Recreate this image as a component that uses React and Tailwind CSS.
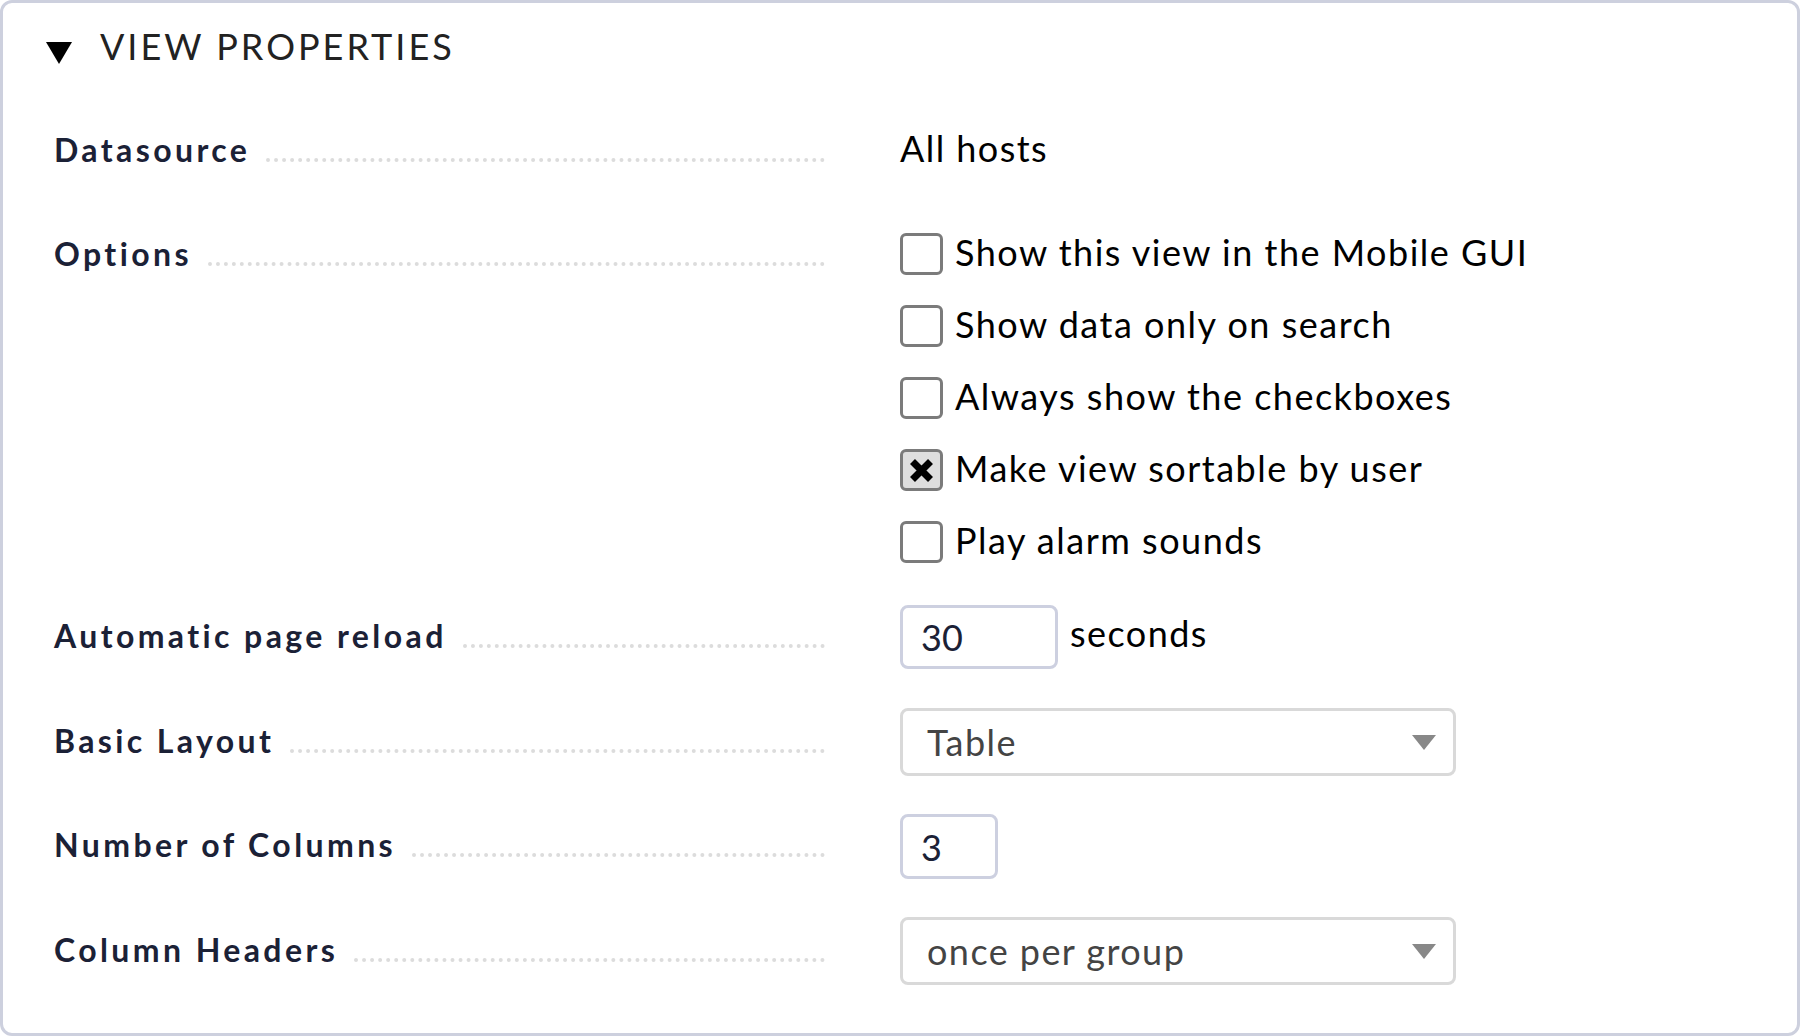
import React from 'react';

function Label({ children, className = '' }) {
  return (
    <div className={`flex items-baseline w-[897px] shrink-0 pl-[51px] pr-[75px] ${className}`}>
      <span className="text-[32px] leading-none font-bold tracking-[3.4px] text-[#1b2136] whitespace-nowrap">
        {children}
      </span>
      <span className="flex-1 ml-[16px] border-b-[4px] border-dotted border-[#dcdcdc]" />
    </div>
  );
}

function Check({ checked, label }) {
  return (
    <div className="flex items-baseline text-[36px] leading-[72px] tracking-[1.5px] text-black">
      <span
        className={
          checked
            ? 'self-center mt-[4px] w-[43px] h-[42px] shrink-0 rounded-[6px] border-[3px] border-[#7b7b7b] bg-[#dedede] flex items-center justify-center'
            : 'self-center mt-[4px] w-[43px] h-[42px] shrink-0 rounded-[6px] border-[3px] border-[#7b7b7b] bg-white'
        }
      >
        {checked && (
          <svg width="25" height="23" viewBox="0 0 25 23">
            <path d="M3.5 2.5 L21.5 20.5 M21.5 2.5 L3.5 20.5" stroke="#000" strokeWidth="7" />
          </svg>
        )}
      </span>
      <span className="ml-[12px] whitespace-nowrap">{label}</span>
    </div>
  );
}

function Select({ value }) {
  return (
    <div className="w-[556px] h-[68px] border-[3px] border-[#d9d9d9] rounded-[8px] flex items-center justify-between pl-[24px] pr-[17px] text-[36px] leading-none tracking-[0.04em] text-[#444]">
      <span>{value}</span>
      <svg width="24" height="15" viewBox="0 0 24 15">
        <path d="M0 0H24L12 15Z" fill="#888" />
      </svg>
    </div>
  );
}

export default function App() {
  const options = [
    ['Show this view in the Mobile GUI', false],
    ['Show data only on search', false],
    ['Always show the checkboxes', false],
    ['Make view sortable by user', true],
    ['Play alarm sounds', false],
  ];

  return (
    <div className="w-[1800px] h-[1036px] overflow-hidden bg-white border-[3px] border-[#cdd0de] rounded-[12px] font-['Lato',sans-serif]">
      <div className="flex items-end pl-[43px] pt-[25px]">
        <svg width="26" height="22" viewBox="0 0 26 22" className="block">
          <path d="M0 0H26L13 22Z" fill="#000" />
        </svg>
        <h2 className="ml-[28px] text-[36px] leading-none tracking-[3px] text-[#222]">VIEW PROPERTIES</h2>
      </div>

      <div className="flex items-baseline mt-[66px]">
        <Label>Datasource</Label>
        <div className="text-[36px] leading-none tracking-[0.04em] text-black">All hosts</div>
      </div>

      <div className="flex items-baseline mt-[50px]">
        <Label>Options</Label>
        <div className="flex flex-col">
          {options.map(([label, checked]) => (
            <Check key={label} label={label} checked={checked} />
          ))}
        </div>
      </div>

      <div className="flex items-center mt-[29px]">
        <Label className="mb-[3px]">Automatic page reload</Label>
        <div className="w-[158px] h-[64px] border-[3px] border-[#cdd0e0] rounded-[8px] flex items-center pl-[18px] text-[36px] leading-none text-[#1b2136]">
          30
        </div>
        <span className="ml-[12px] mb-[9px] text-[36px] leading-none tracking-[0.04em] text-black">seconds</span>
      </div>

      <div className="flex items-center mt-[39px]">
        <Label className="mb-[3px]">Basic Layout</Label>
        <Select value="Table" />
      </div>

      <div className="flex items-center mt-[38px]">
        <Label className="mb-[3px]">Number of Columns</Label>
        <div className="w-[98px] h-[65px] border-[3px] border-[#cdd0e0] rounded-[8px] flex items-center pl-[18px] text-[36px] leading-none text-[#1b2136]">
          3
        </div>
      </div>

      <div className="flex items-center mt-[38px]">
        <Label className="mb-[3px]">Column Headers</Label>
        <Select value="once per group" />
      </div>
    </div>
  );
}
